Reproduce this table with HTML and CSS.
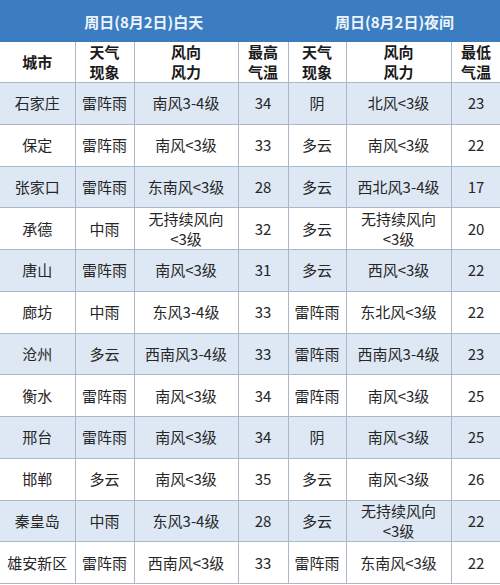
FILE: index.html
```html
<!DOCTYPE html>
<html lang="zh-CN">
<head>
<meta charset="utf-8">
<title>天气预报</title>
<link rel="stylesheet" href="styles.css">
</head>
<body>
<table class="wx">
  <colgroup>
    <col class="c-city"><col class="c-wea"><col class="c-wind"><col class="c-temp">
    <col class="c-wea2"><col class="c-wind2"><col class="c-temp2">
  </colgroup>
  <thead>
    <tr class="band">
      <th colspan="4">周日(8月2日)白天</th>
      <th colspan="3">周日(8月2日)夜间</th>
    </tr>
    <tr class="head">
      <th>城市</th><th>天气<br>现象</th><th>风向<br>风力</th><th>最高<br>气温</th>
      <th>天气<br>现象</th><th>风向<br>风力</th><th>最低<br>气温</th>
    </tr>
  </thead>
  <tbody>
    <tr class="alt"><td>石家庄</td><td>雷阵雨</td><td>南风3-4级</td><td>34</td><td>阴</td><td>北风&lt;3级</td><td>23</td></tr>
    <tr><td>保定</td><td>雷阵雨</td><td>南风&lt;3级</td><td>33</td><td>多云</td><td>南风&lt;3级</td><td>22</td></tr>
    <tr class="alt"><td>张家口</td><td>雷阵雨</td><td>东南风&lt;3级</td><td>28</td><td>多云</td><td>西北风3-4级</td><td>17</td></tr>
    <tr><td>承德</td><td>中雨</td><td class="two">无持续风向<br>&lt;3级</td><td>32</td><td>多云</td><td class="two">无持续风向<br>&lt;3级</td><td>20</td></tr>
    <tr class="alt"><td>唐山</td><td>雷阵雨</td><td>南风&lt;3级</td><td>31</td><td>多云</td><td>西风&lt;3级</td><td>22</td></tr>
    <tr><td>廊坊</td><td>中雨</td><td>东风3-4级</td><td>33</td><td>雷阵雨</td><td>东北风&lt;3级</td><td>22</td></tr>
    <tr class="alt"><td>沧州</td><td>多云</td><td>西南风3-4级</td><td>33</td><td>雷阵雨</td><td>西南风3-4级</td><td>23</td></tr>
    <tr><td>衡水</td><td>雷阵雨</td><td>南风&lt;3级</td><td>34</td><td>雷阵雨</td><td>南风&lt;3级</td><td>25</td></tr>
    <tr class="alt"><td>邢台</td><td>雷阵雨</td><td>南风&lt;3级</td><td>34</td><td>阴</td><td>南风&lt;3级</td><td>25</td></tr>
    <tr><td>邯郸</td><td>多云</td><td>南风&lt;3级</td><td>35</td><td>多云</td><td>南风&lt;3级</td><td>26</td></tr>
    <tr class="alt"><td>秦皇岛</td><td>中雨</td><td>东风3-4级</td><td>28</td><td>多云</td><td class="two">无持续风向<br>&lt;3级</td><td>22</td></tr>
    <tr><td>雄安新区</td><td>雷阵雨</td><td>西南风&lt;3级</td><td>33</td><td>雷阵雨</td><td>东南风&lt;3级</td><td>22</td></tr>
  </tbody>
</table>
</body>
</html>
```

FILE: styles.css
```css
html, body {
  margin: 0;
  padding: 0;
  background: #ffffff;
}

body {
  font-family: "Noto Sans CJK SC", "Noto Sans", sans-serif;
  color: #262626;
  width: 500px;
  height: 585px;
  overflow: hidden;
}

.wx {
  width: 501px;
  table-layout: fixed;
  border-collapse: collapse;
  margin: 0;
}

.c-city { width: 75px; }
.c-wea { width: 59px; }
.c-wind { width: 104px; }
.c-temp { width: 50px; }
.c-wea2 { width: 58px; }
.c-wind2 { width: 105px; }
.c-temp2 { width: 50px; }

.wx th,
.wx td {
  padding: 0;
  text-align: center;
  vertical-align: middle;
  border: 1px solid #a9b7c6;
  font-size: 15px;
  white-space: nowrap;
}

.wx tr > :first-child { border-left: none; }

.band th {
  height: 39px;
  line-height: 20px;
  background: #3b7dc0;
  color: #eef4fb;
  font-weight: 700;
  border-color: #3b7dc0;
  border-top: none;
  padding-top: 2px;
  padding-bottom: 0;
}

.head th {
  height: 39px;
  font-weight: 700;
  color: #1a1a1a;
  line-height: 20px;
  background: #ffffff;
}

.wx td {
  height: 40.75px;
  line-height: 20px;
}

.alt td {
  background: #dde8f4;
}

.two {
  line-height: 20px;
}
```
